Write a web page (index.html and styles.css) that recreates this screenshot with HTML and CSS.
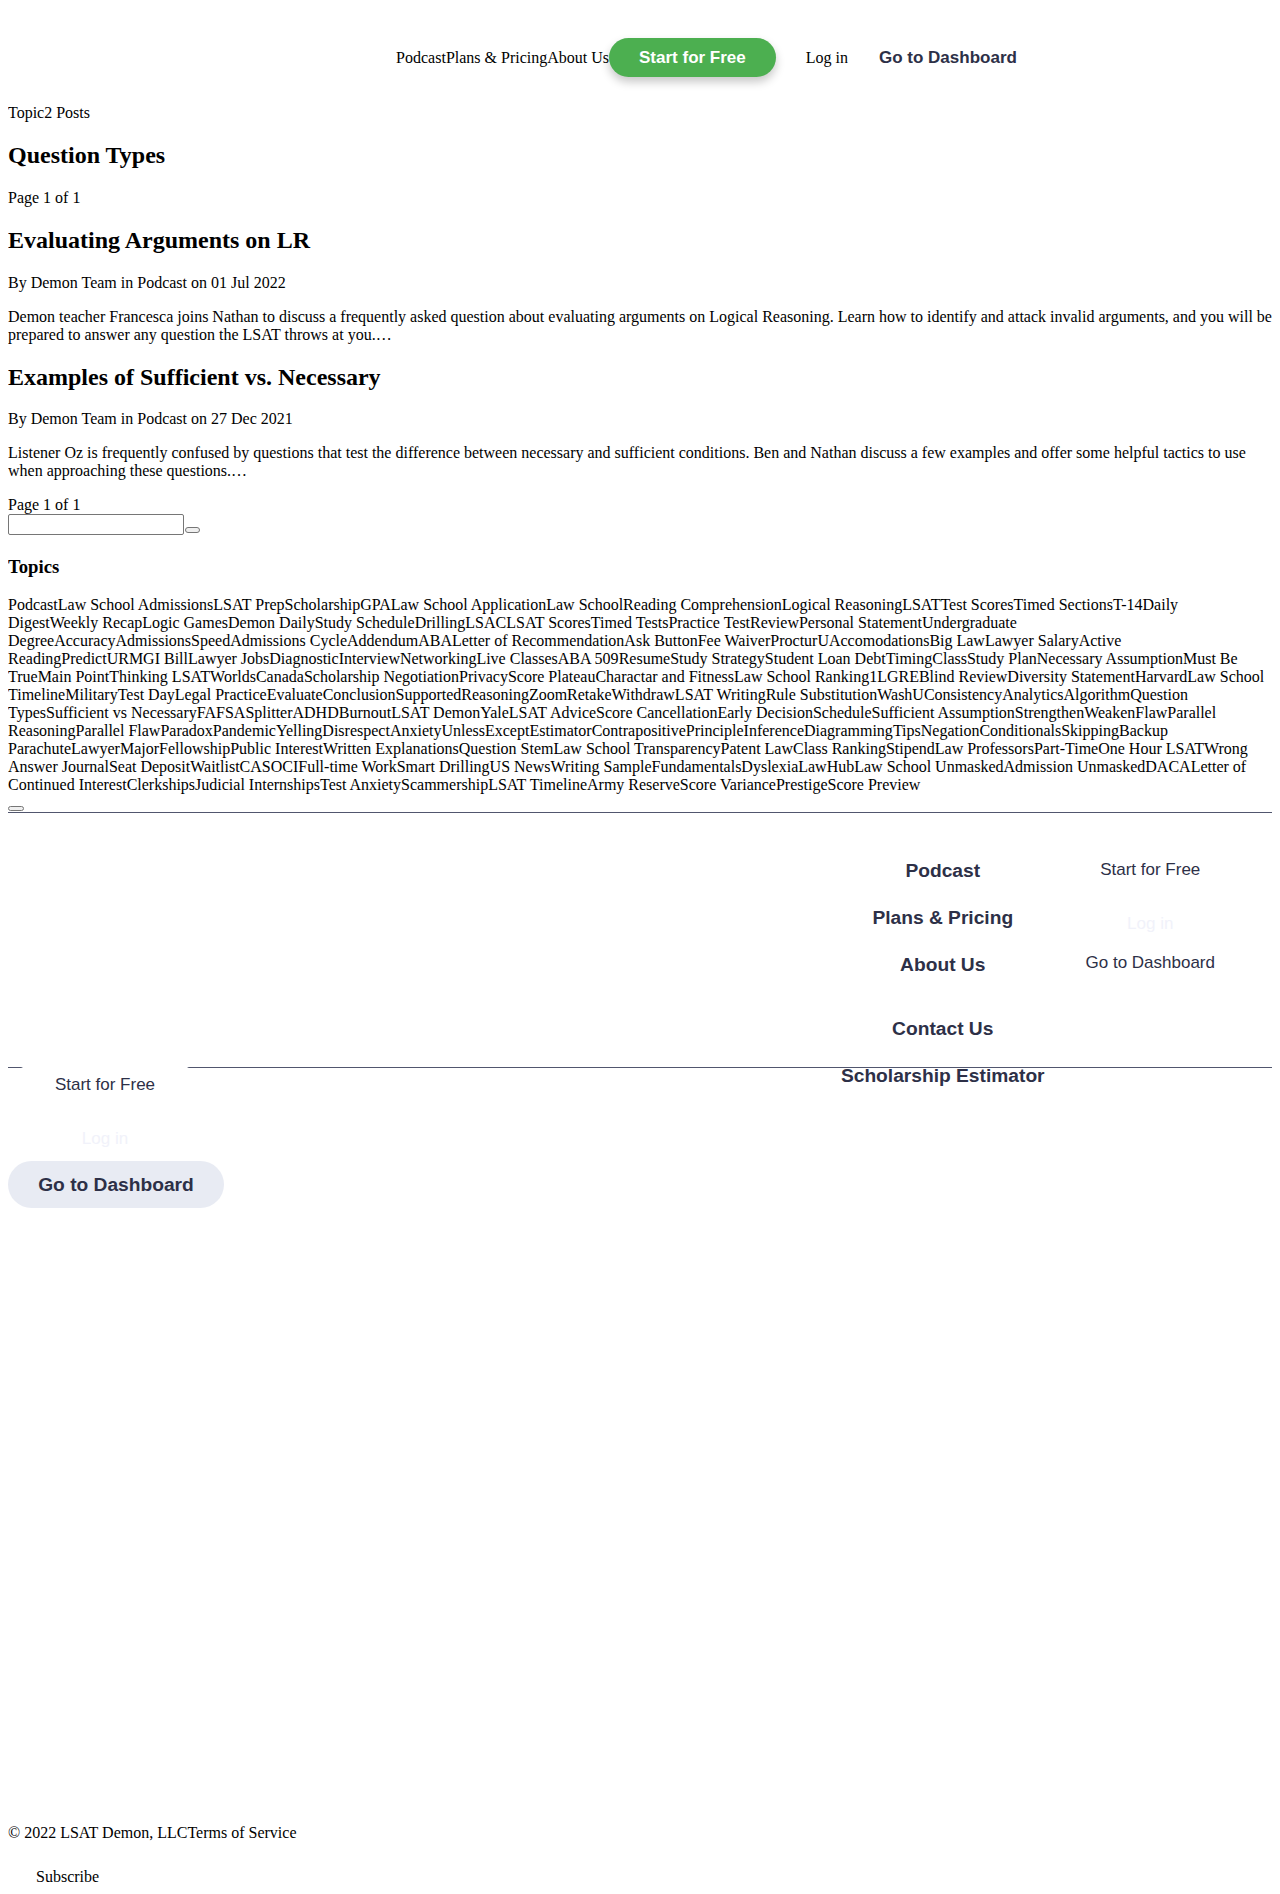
FILE: index.html
```html
<!DOCTYPE html>
<html lang="en">
<head>
<meta charset="utf-8">
<title>Question Types – LSAT Demon</title>
<link rel="stylesheet" href="styles.css">
</head>
<body>
<header class="site-header">
  <nav class="main-nav"><a href="#">Podcast</a><a href="#">Plans &amp; Pricing</a><a href="#">About Us</a></nav>
  <a class="btn-start" href="#">Start for Free</a>
  <a class="nav-login" href="#">Log in</a>
  <a class="nav-dash" href="#">Go to Dashboard</a>
</header>

<main class="content">
  <p>Topic<span>2 Posts</span></p>
  <h2>Question Types</h2>
  <p>Page 1 of 1</p>

  <article>
    <h2>Evaluating Arguments on LR</h2>
    <p>By Demon Team in Podcast on 01 Jul 2022</p>
    <p>Demon teacher Francesca joins Nathan to discuss a frequently asked question about evaluating arguments on Logical Reasoning. Learn how to identify and attack invalid arguments, and you will be prepared to answer any question the LSAT throws at you.…</p>
  </article>

  <article>
    <h2>Examples of Sufficient vs. Necessary</h2>
    <p>By Demon Team in Podcast on 27 Dec 2021</p>
    <p>Listener Oz is frequently confused by questions that test the difference between necessary and sufficient conditions. Ben and Nathan discuss a few examples and offer some helpful tactics to use when approaching these questions.…</p>
  </article>

  <div class="pager">
    <div>Page 1 of 1</div>
    <form class="pager-form"><input class="pager-input" type="text" aria-label="Page"><button class="pager-go" type="button" aria-label="Go"></button></form>
  </div>

  <h3>Topics</h3>
  <div class="topics"><a href="#">Podcast</a><a href="#">Law School Admissions</a><a href="#">LSAT Prep</a><a href="#">Scholarship</a><a href="#">GPA</a><a href="#">Law School Application</a><a href="#">Law School</a><a href="#">Reading Comprehension</a><a href="#">Logical Reasoning</a><a href="#">LSAT</a><a href="#">Test Scores</a><a href="#">Timed Sections</a><a href="#">T-14</a><a href="#">Daily Digest</a><a href="#">Weekly Recap</a><a href="#">Logic Games</a><a href="#">Demon Daily</a><a href="#">Study Schedule</a><a href="#">Drilling</a><a href="#">LSAC</a><a href="#">LSAT Scores</a><a href="#">Timed Tests</a><a href="#">Practice Test</a><a href="#">Review</a><a href="#">Personal Statement</a><a href="#">Undergraduate Degree</a><a href="#">Accuracy</a><a href="#">Admissions</a><a href="#">Speed</a><a href="#">Admissions Cycle</a><a href="#">Addendum</a><a href="#">ABA</a><a href="#">Letter of Recommendation</a><a href="#">Ask Button</a><a href="#">Fee Waiver</a><a href="#">ProcturU</a><a href="#">Accomodations</a><a href="#">Big Law</a><a href="#">Lawyer Salary</a><a href="#">Active Reading</a><a href="#">Predict</a><a href="#">URM</a><a href="#">GI Bill</a><a href="#">Lawyer Jobs</a><a href="#">Diagnostic</a><a href="#">Interview</a><a href="#">Networking</a><a href="#">Live Classes</a><a href="#">ABA 509</a><a href="#">Resume</a><a href="#">Study Strategy</a><a href="#">Student Loan Debt</a><a href="#">Timing</a><a href="#">Class</a><a href="#">Study Plan</a><a href="#">Necessary Assumption</a><a href="#">Must Be True</a><a href="#">Main Point</a><a href="#">Thinking LSAT</a><a href="#">Worlds</a><a href="#">Canada</a><a href="#">Scholarship Negotiation</a><a href="#">Privacy</a><a href="#">Score Plateau</a><a href="#">Charactar and Fitness</a><a href="#">Law School Ranking</a><a href="#">1L</a><a href="#">GRE</a><a href="#">Blind Review</a><a href="#">Diversity Statement</a><a href="#">Harvard</a><a href="#">Law School Timeline</a><a href="#">Military</a><a href="#">Test Day</a><a href="#">Legal Practice</a><a href="#">Evaluate</a><a href="#">Conclusion</a><a href="#">Supported</a><a href="#">Reasoning</a><a href="#">Zoom</a><a href="#">Retake</a><a href="#">Withdraw</a><a href="#">LSAT Writing</a><a href="#">Rule Substitution</a><a href="#">WashU</a><a href="#">Consistency</a><a href="#">Analytics</a><a href="#">Algorithm</a><a href="#">Question Types</a><a href="#">Sufficient vs Necessary</a><a href="#">FAFSA</a><a href="#">Splitter</a><a href="#">ADHD</a><a href="#">Burnout</a><a href="#">LSAT Demon</a><a href="#">Yale</a><a href="#">LSAT Advice</a><a href="#">Score Cancellation</a><a href="#">Early Decision</a><a href="#">Schedule</a><a href="#">Sufficient Assumption</a><a href="#">Strengthen</a><a href="#">Weaken</a><a href="#">Flaw</a><a href="#">Parallel Reasoning</a><a href="#">Parallel Flaw</a><a href="#">Paradox</a><a href="#">Pandemic</a><a href="#">Yelling</a><a href="#">Disrespect</a><a href="#">Anxiety</a><a href="#">Unless</a><a href="#">Except</a><a href="#">Estimator</a><a href="#">Contrapositive</a><a href="#">Principle</a><a href="#">Inference</a><a href="#">Diagramming</a><a href="#">Tips</a><a href="#">Negation</a><a href="#">Conditionals</a><a href="#">Skipping</a><a href="#">Backup Parachute</a><a href="#">Lawyer</a><a href="#">Major</a><a href="#">Fellowship</a><a href="#">Public Interest</a><a href="#">Written Explanations</a><a href="#">Question Stem</a><a href="#">Law School Transparency</a><a href="#">Patent Law</a><a href="#">Class Ranking</a><a href="#">Stipend</a><a href="#">Law Professors</a><a href="#">Part-Time</a><a href="#">One Hour LSAT</a><a href="#">Wrong Answer Journal</a><a href="#">Seat Deposit</a><a href="#">Waitlist</a><a href="#">CAS</a><a href="#">OCI</a><a href="#">Full-time Work</a><a href="#">Smart Drilling</a><a href="#">US News</a><a href="#">Writing Sample</a><a href="#">Fundamentals</a><a href="#">Dyslexia</a><a href="#">LawHub</a><a href="#">Law School Unmasked</a><a href="#">Admission Unmasked</a><a href="#">DACA</a><a href="#">Letter of Continued Interest</a><a href="#">Clerkships</a><a href="#">Judicial Internships</a><a href="#">Test Anxiety</a><a href="#">Scammership</a><a href="#">LSAT Timeline</a><a href="#">Army Reserve</a><a href="#">Score Variance</a><a href="#">Prestige</a><a href="#">Score Preview</a></div>
  <button class="topics-more" type="button" aria-label="More topics"></button>
</main>

<footer class="site-footer">
  <div class="footer-top">
    <ul class="footer-links">
      <li><a href="#">Podcast</a></li>
      <li><a href="#">Plans &amp; Pricing</a></li>
      <li><a href="#">About Us</a></li>
      <li class="group-start"><a href="#">Contact Us</a></li>
      <li><a href="#">Scholarship Estimator</a></li>
    </ul>
    <div class="footer-actions">
      <a class="fa-start" href="#">Start for Free</a>
      <a class="fa-login" href="#">Log in</a>
      <a class="fa-dash" href="#">Go to Dashboard</a>
    </div>
  </div>
  <div class="footer-mobile">
    <div class="mobile-actions">
      <a class="pill-white" href="#">Start for Free</a>
      <a class="mobile-login" href="#">Log in</a>
      <a class="pill-gray" href="#">Go to Dashboard</a>
    </div>
  </div>
  <div class="footer-legal">
    <p class="copyright">© 2022 LSAT Demon, LLC<a href="#">Terms of Service</a></p>
    <div class="subscribe">Subscribe</div>
  </div>
</footer>
</body>
</html>
```

FILE: styles.css
```css
html {
  background: #ffffff;
}

body {
  margin: 8px;
  font-family: "Liberation Serif", "Times New Roman", serif;
  font-size: 16px;
  line-height: 18px;
  color: #000000;
}

a {
  color: inherit;
  text-decoration: none;
}

/* ---------- header ---------- */
.site-header {
  display: flex;
  align-items: center;
  justify-content: center;
  height: 39px;
  padding: 30px 0 11px 133px;
}

.main-nav {
  display: flex;
}

.btn-start {
  display: flex;
  align-items: center;
  height: 39px;
  padding: 0 30px;
  border-radius: 20px;
  background: #4caf50;
  color: #ffffff;
  font-family: "Liberation Sans", Arial, sans-serif;
  font-weight: 700;
  font-size: 17px;
  line-height: 20px;
  box-shadow: 0 5px 10px rgba(0, 0, 0, 0.22);
}

.nav-login {
  margin: 0 31px 0 30px;
}

.nav-dash {
  font-family: "Liberation Sans", Arial, sans-serif;
  font-weight: 700;
  font-size: 17px;
  line-height: 20px;
  color: #2d3047;
}

/* ---------- content ---------- */
p {
  margin: 16px 0;
}

h2 {
  font-size: 24px;
  line-height: 27px;
  margin: 19.92px 0;
}

h3 {
  font-size: 18.72px;
  line-height: 21px;
  margin: 18.72px 0;
}

.pager {
  margin-top: 16px;
}

.pager-form {
  display: flex;
  align-items: flex-end;
  height: 23px;
  margin: 0;
}

.pager-input {
  box-sizing: border-box;
  width: 176px;
  height: 21px;
  margin: 0;
  padding: 0 2px;
  border: 1px solid #767676;
  border-radius: 2px;
  background: #ffffff;
  align-self: flex-start;
}

.pager-go {
  box-sizing: border-box;
  width: 15px;
  height: 6px;
  margin: 0 0 4px 1px;
  padding: 0;
  border: 1px solid #767676;
  border-radius: 3px;
  background: #efefef;
}

.topics {
  margin: 0;
}

.topics-more {
  display: block;
  box-sizing: border-box;
  width: 16px;
  height: 5px;
  margin: 12px 0 0;
  padding: 0;
  border: 1px solid #767676;
  border-radius: 3px;
  background: #efefef;
}

/* ---------- footer ---------- */
.site-footer {
  font-family: "Liberation Sans", Arial, sans-serif;
  color: #2d3047;
}

.footer-top {
  display: flex;
  justify-content: flex-end;
  height: 254px;
  margin-top: 1.5px;
  padding-right: 18px;
  border-top: 1px solid #51566e;
}

.footer-links {
  display: flex;
  flex-direction: column;
  align-items: center;
  gap: 25px;
  width: 207.5px;
  margin: 0;
  padding: 46.7px 0 0;
  list-style: none;
  font-weight: 700;
  font-size: 19.2px;
  line-height: 22px;
  white-space: nowrap;
}

.footer-links .group-start {
  margin-top: 17px;
}

.footer-actions {
  display: flex;
  flex-direction: column;
  align-items: center;
  width: 207.5px;
  padding-top: 47px;
  font-size: 17px;
  line-height: 20px;
}

.fa-login {
  margin-top: 34px;
  color: #f1f2fa;
}

.fa-dash {
  margin-top: 19px;
}

.footer-mobile {
  border-top: 1px solid #51566e;
}

.mobile-actions {
  width: 194px;
  text-align: center;
  font-size: 17px;
  line-height: 20px;
}

.pill-white {
  display: block;
  width: 186px;
  height: 39px;
  margin: -3px auto 0;
  border-radius: 19.5px;
  background: #ffffff;
  line-height: 39px;
}

.mobile-login {
  display: block;
  margin-top: 25px;
  color: #f1f2fa;
}

.pill-gray {
  display: block;
  width: 216px;
  height: 47px;
  margin-top: 12px;
  border-radius: 23.5px;
  background: #e8ebf3;
  font-weight: 700;
  font-size: 19.2px;
  line-height: 47px;
  text-align: center;
}

.footer-legal {
  margin-top: 616px;
  font-family: "Liberation Serif", "Times New Roman", serif;
  color: #000000;
}

.copyright {
  margin: 0;
}

.subscribe {
  margin-top: 26px;
  padding-left: 28px;
}
```
